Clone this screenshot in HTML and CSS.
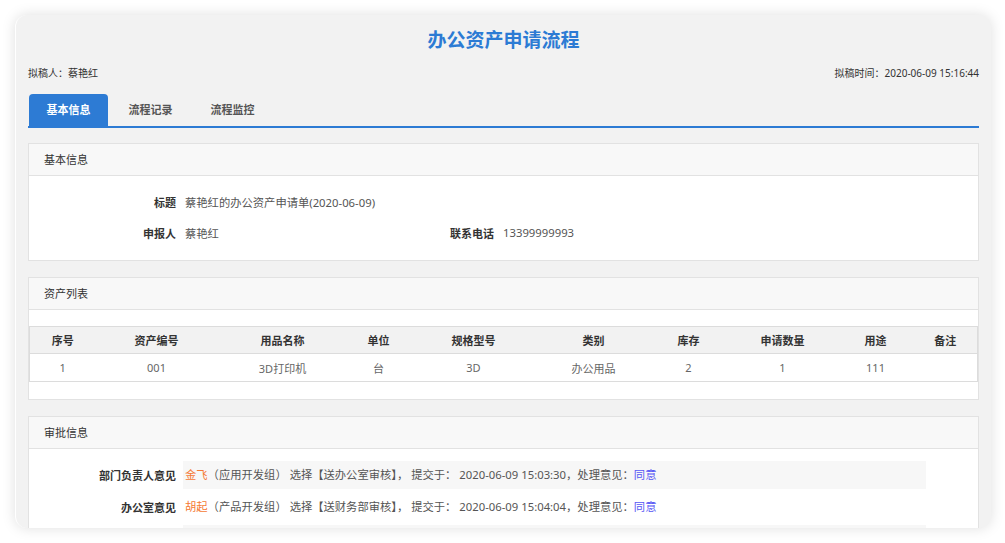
FILE: index.html
```html
<!DOCTYPE html>
<html lang="zh-CN">
<head>
<meta charset="utf-8">
<title>办公资产申请流程</title>
<link rel="stylesheet" href="styles.css">
</head>
<body>
<div class="window">
  <h1 class="title">办公资产申请流程</h1>
  <div class="meta">
    <span>拟稿人：蔡艳红</span>
    <span>拟稿时间：2020-06-09 15:16:44</span>
  </div>
  <div class="tabs">
    <div class="tab active">基本信息</div>
    <div class="tab">流程记录</div>
    <div class="tab">流程监控</div>
  </div>

  <section class="panel first">
    <div class="panel-head">基本信息</div>
    <div class="panel-body info">
      <div class="info-grid">
        <div class="lbl">标题</div>
        <div class="val span3">蔡艳红的办公资产申请单(2020-06-09)</div>
        <div class="lbl">申报人</div>
        <div class="val">蔡艳红</div>
        <div class="lbl">联系电话</div>
        <div class="val">13399999993</div>
      </div>
    </div>
  </section>

  <section class="panel">
    <div class="panel-head">资产列表</div>
    <div class="panel-body list">
      <table class="grid">
        <colgroup>
          <col class="c1"><col class="c2"><col class="c3"><col class="c4"><col class="c5">
          <col class="c6"><col class="c7"><col class="c8"><col class="c9"><col class="c10">
        </colgroup>
        <thead>
          <tr><th>序号</th><th>资产编号</th><th>用品名称</th><th>单位</th><th>规格型号</th><th>类别</th><th>库存</th><th>申请数量</th><th>用途</th><th>备注</th></tr>
        </thead>
        <tbody>
          <tr><td>1</td><td>001</td><td>3D打印机</td><td>台</td><td>3D</td><td>办公用品</td><td>2</td><td>1</td><td>111</td><td></td></tr>
        </tbody>
      </table>
    </div>
  </section>

  <section class="panel">
    <div class="panel-head">审批信息</div>
    <div class="panel-body approvals">
      <div class="ap-row">
        <div class="lbl">部门负责人意见</div>
        <div class="ap-val shaded"><span class="who">金飞</span><span class="txt">（应用开发组） 选择【送办公室审核】， 提交于： 2020-06-09 15:03:30，处理意见：</span><span class="ok">同意</span></div>
      </div>
      <div class="ap-row">
        <div class="lbl">办公室意见</div>
        <div class="ap-val"><span class="who">胡起</span><span class="txt">（产品开发组） 选择【送财务部审核】， 提交于： 2020-06-09 15:04:04，处理意见：</span><span class="ok">同意</span></div>
      </div>
      <div class="ap-row">
        <div class="lbl">财务部意见</div>
        <div class="ap-val shaded"><span class="who">李明</span><span class="txt">（财务部） 选择【送资产管理员审核】， 提交于： 2020-06-09 15:05:12，处理意见：</span><span class="ok">同意</span></div>
      </div>
    </div>
  </section>
</div>
</body>
</html>
```

FILE: styles.css
```css
* { box-sizing: border-box; }

html, body {
  margin: 0;
  padding: 0;
  background: #ffffff;
}

body {
  font-family: "Noto Sans", "Noto Sans CJK SC", sans-serif;
  color: #333;
  width: 1005px;
  height: 543px;
  overflow: hidden;
}

.window {
  margin: 15px 0 0 15px;
  width: 976px;
  height: 513px;
  background: #f2f2f2;
  border-radius: 12px;
  border-left: 1px solid #ffffff;
  box-shadow: 0 0 14px rgba(0, 0, 0, 0.13);
  overflow: hidden;
  padding: 10px 12px 0 12px;
}

.title {
  margin: 0;
  font-size: 19px;
  line-height: 30px;
  font-weight: bold;
  color: #2c7bd4;
  text-align: center;
}

.meta {
  margin-top: 11px;
  display: flex;
  justify-content: space-between;
  font-size: 10px;
  line-height: 14px;
  color: #333;
}

.tabs {
  margin-top: 14px;
  display: flex;
  gap: 3px;
  padding-left: 1px;
  border-bottom: 2px solid #2d7bd4;
}

.tab {
  width: 79px;
  height: 32px;
  line-height: 32px;
  text-align: center;
  font-size: 11px;
  font-weight: bold;
  color: #555;
  border-radius: 4px 4px 0 0;
}

.tab.active {
  background: #2d7bd4;
  color: #ffffff;
}

.panel {
  margin-top: 16px;
  background: #ffffff;
  border: 1px solid #e2e2e2;
}

.panel.first {
  margin-top: 15px;
}

.panel-head {
  height: 32px;
  line-height: 31px;
  padding-left: 15px;
  font-size: 11px;
  color: #333;
  background: #f8f8f8;
  border-bottom: 1px solid #e2e2e2;
}

.info {
  padding: 10px 0 12px 0;
}

.info-grid {
  display: grid;
  grid-template-columns: 147px 153px 147px 1fr;
  column-gap: 9px;
  grid-auto-rows: 31px;
  align-items: center;
  font-size: 11px;
}

.lbl {
  text-align: right;
  font-weight: bold;
  color: #333;
  font-size: 11px;
}

.val {
  color: #555;
  font-size: 11.3px;
}

.span3 {
  grid-column: span 3;
}

.list {
  padding: 16px 0 17px 0;
}

.grid {
  width: 100%;
  border-collapse: collapse;
  table-layout: fixed;
  font-size: 11px;
  border: 1px solid #dcdcdc;
}

.grid th {
  height: 27px;
  background: #f2f2f2;
  font-weight: bold;
  color: #333;
  border-bottom: 1px solid #dcdcdc;
  text-align: center;
  padding: 0;
}

.grid td {
  height: 28px;
  text-align: center;
  color: #666;
  padding: 0;
}

.c1 { width: 66px; }
.c2 { width: 122px; }
.c3 { width: 130px; }
.c4 { width: 62px; }
.c5 { width: 128px; }
.c6 { width: 112px; }
.c7 { width: 78px; }
.c8 { width: 110px; }
.c9 { width: 76px; }
.c10 { width: auto; }

.approvals {
  padding-top: 12px;
}

.ap-row {
  display: flex;
  align-items: center;
  height: 28px;
  margin-bottom: 4px;
  font-size: 11px;
}

.ap-row .lbl {
  width: 147px;
  flex: none;
  margin-right: 7px;
}

.ap-val {
  width: 743px;
  height: 28px;
  line-height: 28px;
  padding-left: 2px;
  color: #555;
  font-size: 11.3px;
  white-space: nowrap;
}

.ap-val.shaded {
  background: #f7f7f7;
}

.who {
  color: #f57a35;
}

.ok {
  color: #5656f5;
}
```
